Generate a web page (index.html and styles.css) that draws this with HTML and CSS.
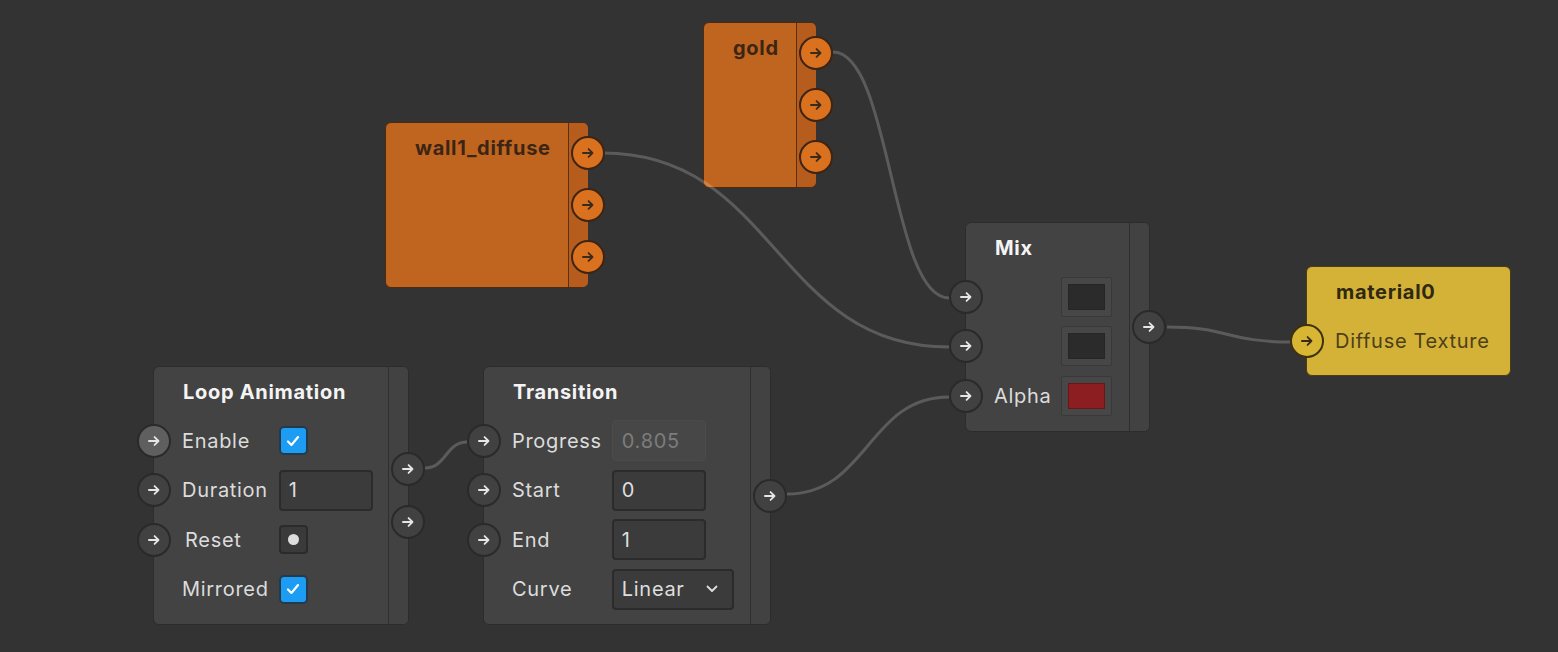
FILE: index.html
```html
<!DOCTYPE html>
<html lang="en">
<head>
<meta charset="utf-8">
<title>Node graph</title>
<link rel="stylesheet" href="styles.css">
</head>
<body>
<div class="canvas">

  <!-- wall1_diffuse -->
  <div class="node node-orange n-wall">
    <div class="head-body"><div class="title">wall1_diffuse</div></div>
    <div class="outs">
      <span class="port"><svg viewBox="0 0 16 16"><path d="M3.5 8h8.5M8.5 4.5 12 8l-3.5 3.5"/></svg></span>
      <span class="port"><svg viewBox="0 0 16 16"><path d="M3.5 8h8.5M8.5 4.5 12 8l-3.5 3.5"/></svg></span>
      <span class="port"><svg viewBox="0 0 16 16"><path d="M3.5 8h8.5M8.5 4.5 12 8l-3.5 3.5"/></svg></span>
    </div>
  </div>

  <!-- gold -->
  <div class="node node-orange n-gold">
    <div class="head-body"><div class="title">gold</div></div>
    <div class="outs">
      <span class="port"><svg viewBox="0 0 16 16"><path d="M3.5 8h8.5M8.5 4.5 12 8l-3.5 3.5"/></svg></span>
      <span class="port"><svg viewBox="0 0 16 16"><path d="M3.5 8h8.5M8.5 4.5 12 8l-3.5 3.5"/></svg></span>
      <span class="port"><svg viewBox="0 0 16 16"><path d="M3.5 8h8.5M8.5 4.5 12 8l-3.5 3.5"/></svg></span>
    </div>
  </div>

  <!-- Mix -->
  <div class="node node-gray n-mix">
    <div class="body">
      <div class="title">Mix</div>
      <span class="port"><svg viewBox="0 0 16 16"><path d="M3.5 8h8.5M8.5 4.5 12 8l-3.5 3.5"/></svg></span>
      <span class="label"></span>
      <span class="swatch"><span class="swatch-in"></span></span>
      <span class="port"><svg viewBox="0 0 16 16"><path d="M3.5 8h8.5M8.5 4.5 12 8l-3.5 3.5"/></svg></span>
      <span class="label"></span>
      <span class="swatch"><span class="swatch-in"></span></span>
      <span class="port"><svg viewBox="0 0 16 16"><path d="M3.5 8h8.5M8.5 4.5 12 8l-3.5 3.5"/></svg></span>
      <span class="label">Alpha</span>
      <span class="swatch"><span class="swatch-in red"></span></span>
    </div>
    <div class="outs outs-gray">
      <span class="port"><svg viewBox="0 0 16 16"><path d="M3.5 8h8.5M8.5 4.5 12 8l-3.5 3.5"/></svg></span>
    </div>
  </div>

  <!-- material0 -->
  <div class="node node-yellow n-material">
    <div class="body">
      <div class="title">material0</div>
      <span class="port"><svg viewBox="0 0 16 16"><path d="M3.5 8h8.5M8.5 4.5 12 8l-3.5 3.5"/></svg></span>
      <span class="label">Diffuse Texture</span>
    </div>
  </div>

  <!-- Loop Animation -->
  <div class="node node-gray n-loop">
    <div class="body">
      <div class="title">Loop Animation</div>
      <span class="port hover"><svg viewBox="0 0 16 16"><path d="M3.5 8h8.5M8.5 4.5 12 8l-3.5 3.5"/></svg></span>
      <span class="label">Enable</span>
      <span class="check"><svg viewBox="0 0 24 24"><path d="M6.5 12.5l3.8 3.8 7.2-8.6"/></svg></span>
      <span class="port"><svg viewBox="0 0 16 16"><path d="M3.5 8h8.5M8.5 4.5 12 8l-3.5 3.5"/></svg></span>
      <span class="label">Duration</span>
      <span class="field">1</span>
      <span class="port"><svg viewBox="0 0 16 16"><path d="M3.5 8h8.5M8.5 4.5 12 8l-3.5 3.5"/></svg></span>
      <span class="label label-reset">Reset</span>
      <span class="button"><span class="dot"></span></span>
      <span></span>
      <span class="label">Mirrored</span>
      <span class="check"><svg viewBox="0 0 24 24"><path d="M6.5 12.5l3.8 3.8 7.2-8.6"/></svg></span>
    </div>
    <div class="outs outs-gray">
      <span class="port"><svg viewBox="0 0 16 16"><path d="M3.5 8h8.5M8.5 4.5 12 8l-3.5 3.5"/></svg></span>
      <span class="port"><svg viewBox="0 0 16 16"><path d="M3.5 8h8.5M8.5 4.5 12 8l-3.5 3.5"/></svg></span>
    </div>
  </div>

  <!-- Transition -->
  <div class="node node-gray n-trans">
    <div class="body">
      <div class="title">Transition</div>
      <span class="port"><svg viewBox="0 0 16 16"><path d="M3.5 8h8.5M8.5 4.5 12 8l-3.5 3.5"/></svg></span>
      <span class="label">Progress</span>
      <span class="field disabled">0.805</span>
      <span class="port"><svg viewBox="0 0 16 16"><path d="M3.5 8h8.5M8.5 4.5 12 8l-3.5 3.5"/></svg></span>
      <span class="label">Start</span>
      <span class="field">0</span>
      <span class="port"><svg viewBox="0 0 16 16"><path d="M3.5 8h8.5M8.5 4.5 12 8l-3.5 3.5"/></svg></span>
      <span class="label">End</span>
      <span class="field">1</span>
      <span></span>
      <span class="label">Curve</span>
      <span class="select">Linear<svg viewBox="0 0 12 8"><path d="M1.5 1.5 6 6l4.5-4.5"/></svg></span>
    </div>
    <div class="outs outs-gray">
      <span class="port"><svg viewBox="0 0 16 16"><path d="M3.5 8h8.5M8.5 4.5 12 8l-3.5 3.5"/></svg></span>
    </div>
  </div>

  <svg class="wires" viewBox="0 0 1558 652" width="1558" height="652">
    <path d="M833 52 C891 52 891 298 949 298"/>
    <path d="M603 153 C776 153 776 347 949 347"/>
    <path d="M425 468 C446 468 446 442 467 442"/>
    <path d="M787 494 C868 494 868 397 949 397"/>
    <path d="M1167 327 C1228 327 1228 342 1290 342"/>
  </svg>
</div>
</body>
</html>
```

FILE: styles.css
```css
* { box-sizing: border-box; }

html, body {
  margin: 0;
  padding: 0;
  background: #333333;
}

body {
  font-family: Inter, "Noto Sans", "Liberation Sans", sans-serif;
  font-size: 20px;
  letter-spacing: 0.7px;
  color: #dedede;
  overflow: hidden;
}

.canvas {
  position: relative;
  width: 1558px;
  height: 652px;
  background: #333333;
}

/* ---------- nodes (free canvas placement) ---------- */
.node {
  position: absolute;
  display: flex;
  border: 1px solid #2a2a2a;
  border-radius: 6px;
}

.n-wall     { left: 385px;  top: 122px; width: 202px; height: 166px; }
.n-gold     { left: 703px;  top: 22px;  width: 113px; height: 166px; }
.n-mix      { left: 965px;  top: 222px; width: 185px; height: 210px; }
.n-material { left: 1306px; top: 266px; width: 205px; height: 110px; }
.n-loop     { left: 153px;  top: 366px; width: 256px; height: 259px; }
.n-trans    { left: 483px;  top: 366px; width: 288px; height: 259px; }

.node-gray {
  background: #434343;
  border-color: #2c2c2c;
}

.node-orange {
  background: #c0651f;
  border-color: #4e2a10;
}

.node-yellow {
  background: #d4b237;
  border-color: #4a3f14;
}

.title {
  font-weight: 700;
  line-height: 24px;
  white-space: nowrap;
}

/* orange texture nodes */
.head-body {
  flex: 1;
  padding: 13px 17px 0 29px;
}

.node-orange .title {
  color: #3c2515;
}

/* gray + yellow grid nodes */
.body {
  flex: 1;
  display: grid;
  grid-template-columns: 17px max-content max-content;
  grid-template-rows: 49px;
  grid-auto-rows: 49.5px;
  align-items: center;
  align-content: start;
}

.body .title {
  grid-column: 1 / -1;
  padding-left: 29px;
  color: #f4f4f4;
}

.node-yellow .body .title {
  color: #2f2812;
}

.label {
  padding: 0 10px 0 11px;
  white-space: nowrap;
  color: #dcdcdc;
  line-height: 24px;
}

.label-reset {
  padding-left: 14px;
}

.node-yellow .label {
  color: #4b401a;
}

/* right output strip */
.outs {
  width: 20px;
  flex: none;
  display: flex;
  flex-direction: column;
  justify-content: center;
  align-items: flex-end;
  gap: 18px;
  border-left: 1px solid #5a3014;
  background: #b65d1e;
  border-radius: 0 5px 5px 0;
}

.outs .port {
  margin-right: -17px;
}

.outs-gray {
  border-left: 1px solid #2f2f2f;
  background: #424242;
  gap: 19px;
}

/* ---------- ports ---------- */
.port {
  width: 34px;
  height: 34px;
  border-radius: 50%;
  border: 2px solid #2a2a2a;
  background: #414141;
  display: flex;
  align-items: center;
  justify-content: center;
  flex: none;
  position: relative;
  z-index: 2;
}

.body .port {
  margin-left: -17px;
  justify-self: start;
}

.port svg {
  width: 18px;
  height: 18px;
  fill: none;
  stroke: #e6e6e6;
  stroke-width: 1.6;
  stroke-linecap: round;
  stroke-linejoin: round;
}

.port.hover {
  background: #5f5f5f;
}

.node-orange .port {
  background: #d9711f;
  border-color: #3e2412;
}

.node-orange .port svg,
.node-yellow .port svg {
  stroke: #3a2a1a;
}

.node-yellow .port {
  background: #d8b634;
  border-color: #3b3210;
}

/* ---------- controls ---------- */
.check {
  width: 29px;
  height: 29px;
  border-radius: 5px;
  background: #1c9cf2;
  border: 2px solid #243a4c;
  display: flex;
  align-items: center;
  justify-content: center;
}

.check svg {
  width: 22px;
  height: 22px;
  fill: none;
  stroke: #ffffff;
  stroke-width: 2.4;
  stroke-linecap: round;
  stroke-linejoin: round;
}

.field {
  width: 94px;
  height: 41px;
  border-radius: 4px;
  border: 2px solid #2b2b2b;
  background: #3b3b3b;
  padding-left: 8px;
  display: flex;
  align-items: center;
  color: #dedede;
}

.field.disabled {
  border: 1px solid #4b4b4b;
  background: #474747;
  color: #7c7c7c;
  padding-left: 9px;
}

.button {
  width: 29px;
  height: 29px;
  border-radius: 4px;
  border: 2px solid #2b2b2b;
  background: #3a3a3a;
  display: flex;
  align-items: center;
  justify-content: center;
}

.dot {
  width: 11px;
  height: 11px;
  border-radius: 50%;
  background: #dddddd;
}

.select {
  width: 122px;
  height: 41px;
  border-radius: 4px;
  border: 2px solid #2b2b2b;
  background: #3b3b3b;
  padding: 0 14px 0 8px;
  display: flex;
  align-items: center;
  justify-content: space-between;
  color: #dedede;
}

.select svg {
  width: 12px;
  height: 8px;
  fill: none;
  stroke: #dedede;
  stroke-width: 1.8;
  stroke-linecap: round;
  stroke-linejoin: round;
}

.swatch {
  width: 51px;
  height: 40px;
  border: 1px solid #393939;
  background: #474747;
  border-radius: 2px;
  display: flex;
  align-items: center;
  justify-content: center;
}

.swatch-in {
  width: 37px;
  height: 26px;
  background: #2b2b2b;
  border: 1px solid #262626;
}

.swatch-in.red {
  background: #8c1d20;
  border-color: #6a1618;
}

/* ---------- wires ---------- */
.wires {
  position: absolute;
  left: 0;
  top: 0;
  pointer-events: none;
  z-index: 1;
}

.wires path {
  fill: none;
  stroke: rgba(255, 255, 255, 0.2);
  stroke-width: 3;
}
```
